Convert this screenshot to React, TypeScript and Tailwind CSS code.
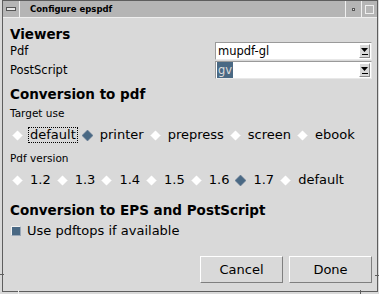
import React from 'react';

const SEL = '#4a6984';

function Diamond({ on }: { on?: boolean }) {
  return (
    <svg width="11" height="11" viewBox="0 0 11 11" className="shrink-0">
      <polygon
        points="5.5,0 11,5.5 5.5,11 0,5.5"
        fill={on ? SEL : '#ffffff'}
        stroke={on ? '#6f8298' : '#d0d0d0'}
        strokeWidth="0.6"
      />
    </svg>
  );
}

function RadioRow({ items, value, focus }: { items: string[]; value: string; focus?: string }) {
  return (
    <div className="mt-[6px] flex h-[18px] items-center gap-[4px] pl-[2px] text-[13px] leading-[12px]">
      {items.map((it) => (
        <div key={it} className="flex items-center gap-[5px]">
          <Diamond on={it === value} />
          <span
            className={`border px-[1px] py-[1px] ${
              it === focus ? 'border-dotted border-black' : 'border-transparent'
            }`}
          >
            {it}
          </span>
        </div>
      ))}
    </div>
  );
}

function Combo({ value, selected }: { value: string; selected?: boolean }) {
  return (
    <div className="flex h-[18px] w-[157px] border border-t-[#9a9a9a] border-l-[#9a9a9a] border-b-[#e8e8e8] border-r-[#e8e8e8] bg-white">
      <div className="flex flex-1 items-stretch pl-[1px] text-[11.5px] leading-[16px]">
        <span className={selected ? 'bg-[#4a6984] px-[1px] text-[#dcdcdc]' : 'px-[1px]'}>{value}</span>
      </div>
      <div className="my-[1px] mr-[1px] flex w-[11px] flex-col items-center justify-center gap-[1px] border border-t-white border-l-white border-b-[#8a8a8a] border-r-[#8a8a8a] bg-[#d9d9d9]">
        <svg width="7" height="6" viewBox="0 0 7 6">
          <polygon points="0,1 7,1 3.5,5" fill="#000" />
        </svg>
        <div className="h-[1px] w-[6px] bg-black" />
      </div>
    </div>
  );
}

function Btn({ children }: { children: React.ReactNode }) {
  return (
    <button className="flex h-[27px] w-[83px] items-center justify-center border border-t-white border-l-white border-b-[#7f7f7f] border-r-[#7f7f7f] bg-[#d9d9d9] text-[13px] leading-none text-black">
      {children}
    </button>
  );
}

export default function App() {
  return (
    <div className="relative h-[294px] w-[379px] overflow-hidden bg-[#d9d9d9] font-['DejaVu_Sans',sans-serif] text-black">
      <div className="ml-[2px] flex h-[292px] w-[376px] flex-col border border-[#5e5e5e]">
        {/* title bar */}
        <div className="flex h-[17px] shrink-0 items-stretch border-b border-b-[#efefef] bg-[#b5b5b5]">
          <div className="flex w-[17px] items-center justify-center border-r border-r-[#efefef]">
            <div className="h-[4px] w-[10px] border border-[#555] bg-[#e6e6e6]" />
          </div>
          <div className="flex flex-1 items-center pl-[10px] pt-[1px] text-[8.5px] font-bold leading-none">
            Configure epspdf
          </div>
          <div className="flex w-[16px] items-center justify-center border-l border-l-[#efefef]">
            <div className="h-[3px] w-[3px] border border-[#555] bg-[#e6e6e6]" />
          </div>
          <div className="flex w-[16px] items-center justify-center border-l border-l-[#efefef]">
            <div className="h-[9px] w-[9px] border border-[#efefef]" />
          </div>
        </div>

        {/* content */}
        <div className="flex flex-1 flex-col pl-[7px] pr-[5px]">
          <div className="mt-[8px] h-[16px] text-[13.5px] font-bold leading-[16px]">Viewers</div>

          <div className="flex items-center text-[11.5px]">
            <span className="flex-1 leading-[18px]">Pdf</span>
            <Combo value="mupdf-gl" />
          </div>
          <div className="mt-[1px] flex items-center text-[11.5px]">
            <span className="flex-1 leading-[18px]">PostScript</span>
            <Combo value="gv" selected />
          </div>

          <div className="mt-[7px] h-[16px] text-[13.5px] font-bold leading-[16px]">Conversion to pdf</div>
          <div className="mt-[4px] h-[14px] text-[10.5px] leading-[14px]">Target use</div>
          <RadioRow
            items={['default', 'printer', 'prepress', 'screen', 'ebook']}
            value="printer"
            focus="default"
          />
          <div className="mt-[7px] h-[14px] text-[10.5px] leading-[14px]">Pdf version</div>
          <RadioRow items={['1.2', '1.3', '1.4', '1.5', '1.6', '1.7', 'default']} value="1.7" />

          <div className="mt-[13px] h-[16px] text-[13.5px] font-bold leading-[16px]">
            Conversion to EPS and PostScript
          </div>
          <div className="mt-[4px] flex h-[18px] items-center gap-[6px] pl-[1px] text-[13px] leading-[18px]">
            <div className="h-[10px] w-[10px] border border-t-[#f2f2f2] border-l-[#f2f2f2] border-b-[#9aa8b8] border-r-[#9aa8b8] bg-[#4a6984]" />
            <span>Use pdftops if available</span>
          </div>

          <div className="mt-[16px] flex justify-end gap-[6px]">
            <Btn>Cancel</Btn>
            <Btn>Done</Btn>
          </div>
        </div>
      </div>

      {/* resize corner ticks */}
      <div className="absolute left-[0px] top-[274px] h-[1px] w-[4px] bg-[#5e5e5e]" />
      <div className="absolute left-[18px] top-[290px] h-[4px] w-[1px] bg-[#efefef]" />
      <div className="absolute left-[360px] top-[290px] h-[4px] w-[1px] bg-[#5e5e5e]" />
      <div className="absolute left-[375px] top-[275px] h-[1px] w-[4px] bg-[#5e5e5e]" />
    </div>
  );
}
